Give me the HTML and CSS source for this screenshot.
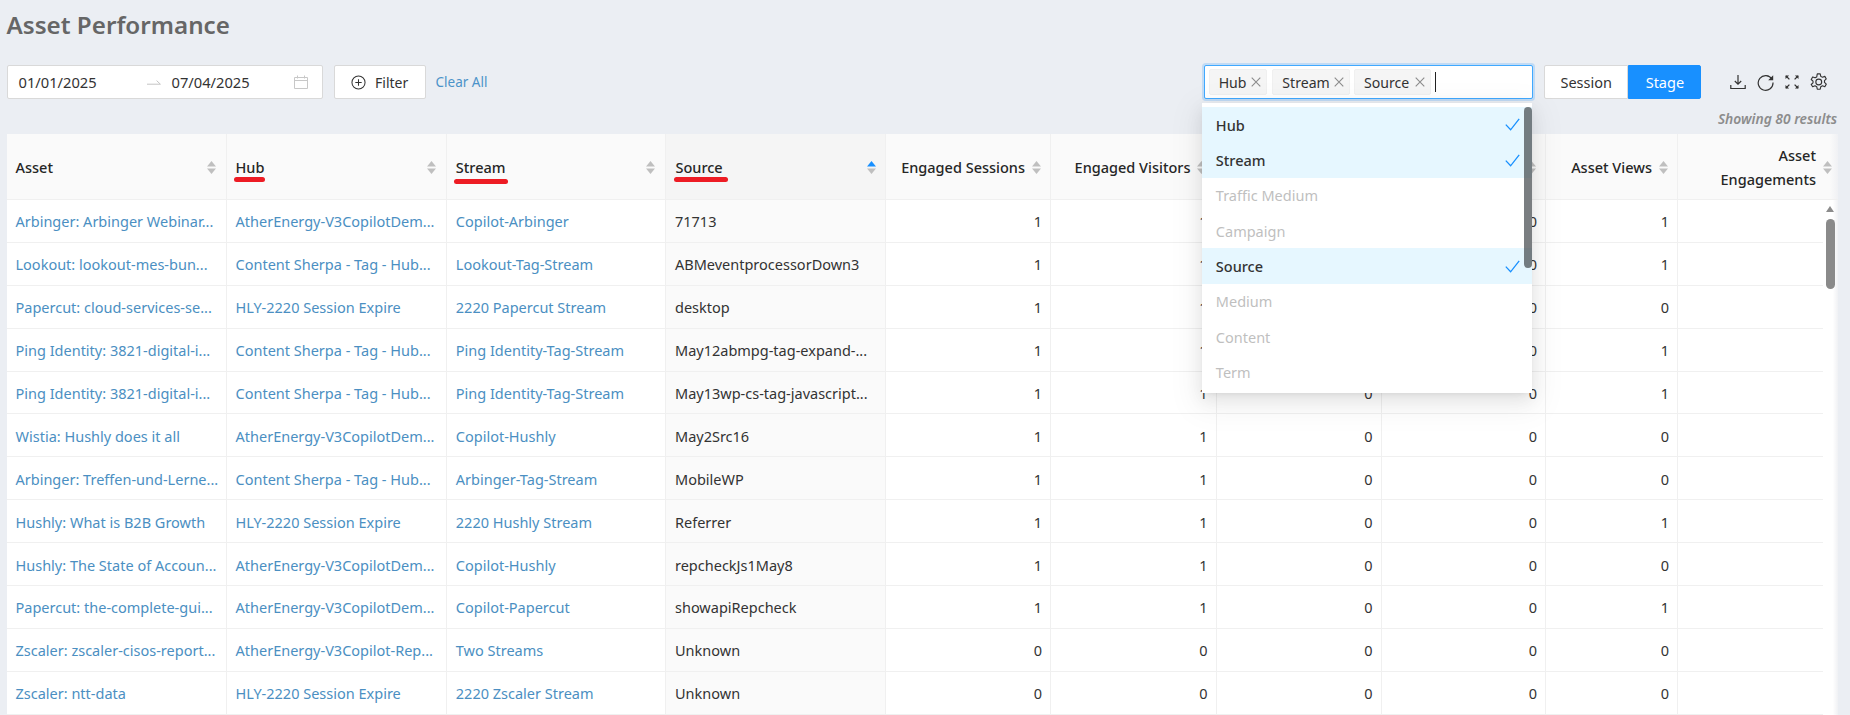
FILE: index.html
```html
<!DOCTYPE html>
<html lang="en">
<head>
<meta charset="utf-8">
<title>Asset Performance</title>
<link rel="stylesheet" href="styles.css">
</head>
<body>
<svg class="defs" width="0" height="0" aria-hidden="true">
  <symbol id="sort" viewBox="0 0 9 13"><path d="M4.5 0 9 5.6H0z"/><path d="M0 7.4h9L4.5 13z"/></symbol>
  <symbol id="tick" viewBox="0 0 15 13"><path d="M.8 6.6 5.6 11.8 14.2.8" fill="none" stroke="currentColor" stroke-width="1.3"/></symbol>
  <symbol id="close" viewBox="0 0 10 10"><path d="M.7.7l8.6 8.6M9.3.7.7 9.3" fill="none" stroke="currentColor" stroke-width="1.1"/></symbol>
</svg>
<main class="page">
  <h1 class="title">Asset Performance</h1>
  <div class="toolbar">
    <div class="range">
      <span class="date first">01/01/2025</span>
      <svg class="range-arrow" viewBox="0 0 14 6"><path d="M0 5.2h13.4L9.6 1.6" fill="none" stroke="#c4c4c4"/></svg>
      <span class="date">07/04/2025</span>
      <svg class="cal" viewBox="0 0 14 14"><path d="M.5 2.5h13v11H.5zM.5 5.5h13M3.5.5v3M10.5.5v3" fill="none" stroke="#c8c8c8"/></svg>
    </div>
    <button class="btn filter"><svg class="plus" viewBox="0 0 16 16"><circle cx="8" cy="8" r="7" fill="none" stroke="#333" stroke-width="1.1"/><path d="M8 4.6v6.8M4.6 8h6.8" stroke="#333" stroke-width="1.1"/></svg>Filter</button>
    <a class="clear">Clear All</a>
    <div class="select">
      <div class="select-box">
        <span class="tag t-hub">Hub<svg class="x"><use href="#close"/></svg></span>
        <span class="tag t-stream">Stream<svg class="x"><use href="#close"/></svg></span>
        <span class="tag t-source">Source<svg class="x"><use href="#close"/></svg></span>
        <span class="caret"></span>
      </div>
      <div class="menu">
        <div class="opt on">Hub<svg class="tick"><use href="#tick"/></svg></div>
        <div class="opt on">Stream<svg class="tick"><use href="#tick"/></svg></div>
        <div class="opt off">Traffic Medium</div>
        <div class="opt off">Campaign</div>
        <div class="opt on">Source<svg class="tick"><use href="#tick"/></svg></div>
        <div class="opt off">Medium</div>
        <div class="opt off">Content</div>
        <div class="opt off">Term</div>
        <span class="menu-thumb"></span>
      </div>
    </div>
    <div class="segment"><span class="seg">Session</span><span class="seg active">Stage</span></div>
    <div class="tools">
      <svg class="tool" viewBox="0 0 16 16"><path d="M8 1v9M4.8 7 8 10.2 11.2 7M.8 11v3.5h14.4V11" fill="none" stroke="#333" stroke-width="1.2"/></svg>
      <svg class="tool wide" viewBox="0 0 17 17"><path d="M15 5.2A7.4 7.4 0 1 0 16 8.5" fill="none" stroke="#333" stroke-width="1.2"/><path d="M16.2 1.2v5h-5z" fill="#333"/></svg>
      <svg class="tool small" viewBox="0 0 14 14"><path d="M1 1l3.4 3.4M13 1 9.6 4.4M1 13l3.4-3.4M13 13 9.6 9.6" stroke="#333" stroke-width="1.3"/><path d="M.5.5h3.6L.5 4.1zM13.5.5H9.9l3.6 3.6zM.5 13.5h3.6L.5 9.9zM13.5 13.5H9.9l3.6-3.6z" fill="#333"/></svg>
      <svg class="tool gear" viewBox="0.4 0 15.2 16"><path d="M6.7.8h2.6l.5 2.2 1.5.8 2.1-.8 1.3 2.3-1.6 1.5v1.6l1.6 1.5-1.3 2.3-2.1-.8-1.5.8-.5 2.2H6.7l-.5-2.2-1.5-.8-2.1.8L1.3 10.2l1.6-1.5V7.3L1.3 5.8l1.3-2.3 2.1.8 1.5-.8z" fill="none" stroke="#333" stroke-width="1" stroke-linejoin="round"/><circle cx="8" cy="8" r="2.6" fill="none" stroke="#333" stroke-width="1"/></svg>
    </div>
  </div>
  <p class="count">Showing 80 results</p>
  <section class="table">
    <div class="head">
      <div class="th"><span class="th-label">Asset</span><svg class="sort"><use href="#sort"/></svg></div>
      <div class="th"><span class="th-label marked">Hub</span><svg class="sort"><use href="#sort"/></svg></div>
      <div class="th"><span class="th-label marked long">Stream</span><svg class="sort"><use href="#sort"/></svg></div>
      <div class="th sorted"><span class="th-label marked wide-mark">Source</span><svg class="sort asc" viewBox="0 0 9 13"><path class="up" d="M4.5 0 9 5.6H0z"/><path d="M0 7.4h9L4.5 13z"/></svg></div>
      <div class="th num"><span class="th-label">Engaged Sessions</span><svg class="sort"><use href="#sort"/></svg></div>
      <div class="th num"><span class="th-label">Engaged Visitors</span><svg class="sort"><use href="#sort"/></svg></div>
      <div class="th num"><svg class="sort"><use href="#sort"/></svg></div>
      <div class="th num"><svg class="sort"><use href="#sort"/></svg></div>
      <div class="th num"><span class="th-label">Asset Views</span><svg class="sort"><use href="#sort"/></svg></div>
      <div class="th num last"><span class="th-label">Asset<br>Engagements</span><svg class="sort"><use href="#sort"/></svg></div>
    </div>
    <div class="body">
      <div class="rows">
        <div class="row"><a class="td">Arbinger: Arbinger Webinar...</a><a class="td">AtherEnergy-V3CopilotDem...</a><a class="td">Copilot-Arbinger</a><span class="td src">71713</span><span class="td n">1</span><span class="td n">1</span><span class="td n">0</span><span class="td n">0</span><span class="td n">1</span><span class="td n"></span></div>
        <div class="row"><a class="td">Lookout: lookout-mes-bun...</a><a class="td">Content Sherpa - Tag - Hub...</a><a class="td">Lookout-Tag-Stream</a><span class="td src">ABMeventprocessorDown3</span><span class="td n">1</span><span class="td n">1</span><span class="td n">0</span><span class="td n">0</span><span class="td n">1</span><span class="td n"></span></div>
        <div class="row"><a class="td">Papercut: cloud-services-se...</a><a class="td">HLY-2220 Session Expire</a><a class="td">2220 Papercut Stream</a><span class="td src">desktop</span><span class="td n">1</span><span class="td n">1</span><span class="td n">0</span><span class="td n">0</span><span class="td n">0</span><span class="td n"></span></div>
        <div class="row"><a class="td">Ping Identity: 3821-digital-i...</a><a class="td">Content Sherpa - Tag - Hub...</a><a class="td">Ping Identity-Tag-Stream</a><span class="td src">May12abmpg-tag-expand-...</span><span class="td n">1</span><span class="td n">1</span><span class="td n">0</span><span class="td n">0</span><span class="td n">1</span><span class="td n"></span></div>
        <div class="row"><a class="td">Ping Identity: 3821-digital-i...</a><a class="td">Content Sherpa - Tag - Hub...</a><a class="td">Ping Identity-Tag-Stream</a><span class="td src">May13wp-cs-tag-javascript...</span><span class="td n">1</span><span class="td n">1</span><span class="td n">0</span><span class="td n">0</span><span class="td n">1</span><span class="td n"></span></div>
        <div class="row"><a class="td">Wistia: Hushly does it all</a><a class="td">AtherEnergy-V3CopilotDem...</a><a class="td">Copilot-Hushly</a><span class="td src">May2Src16</span><span class="td n">1</span><span class="td n">1</span><span class="td n">0</span><span class="td n">0</span><span class="td n">0</span><span class="td n"></span></div>
        <div class="row"><a class="td">Arbinger: Treffen-und-Lerne...</a><a class="td">Content Sherpa - Tag - Hub...</a><a class="td">Arbinger-Tag-Stream</a><span class="td src">MobileWP</span><span class="td n">1</span><span class="td n">1</span><span class="td n">0</span><span class="td n">0</span><span class="td n">0</span><span class="td n"></span></div>
        <div class="row"><a class="td">Hushly: What is B2B Growth</a><a class="td">HLY-2220 Session Expire</a><a class="td">2220 Hushly Stream</a><span class="td src">Referrer</span><span class="td n">1</span><span class="td n">1</span><span class="td n">0</span><span class="td n">0</span><span class="td n">1</span><span class="td n"></span></div>
        <div class="row"><a class="td">Hushly: The State of Accoun...</a><a class="td">AtherEnergy-V3CopilotDem...</a><a class="td">Copilot-Hushly</a><span class="td src">repcheckJs1May8</span><span class="td n">1</span><span class="td n">1</span><span class="td n">0</span><span class="td n">0</span><span class="td n">0</span><span class="td n"></span></div>
        <div class="row"><a class="td">Papercut: the-complete-gui...</a><a class="td">AtherEnergy-V3CopilotDem...</a><a class="td">Copilot-Papercut</a><span class="td src">showapiRepcheck</span><span class="td n">1</span><span class="td n">1</span><span class="td n">0</span><span class="td n">0</span><span class="td n">1</span><span class="td n"></span></div>
        <div class="row"><a class="td">Zscaler: zscaler-cisos-report...</a><a class="td">AtherEnergy-V3Copilot-Rep...</a><a class="td">Two Streams</a><span class="td src">Unknown</span><span class="td n">0</span><span class="td n">0</span><span class="td n">0</span><span class="td n">0</span><span class="td n">0</span><span class="td n"></span></div>
        <div class="row"><a class="td">Zscaler: ntt-data</a><a class="td">HLY-2220 Session Expire</a><a class="td">2220 Zscaler Stream</a><span class="td src">Unknown</span><span class="td n">0</span><span class="td n">0</span><span class="td n">0</span><span class="td n">0</span><span class="td n">0</span><span class="td n"></span></div>
      </div>
      <div class="vscroll"><span class="vs-up"></span><span class="vs-thumb"></span></div>
    </div>
  </section>
</main>
</body>
</html>
```
FILE: styles.css
```css
* { box-sizing: border-box; }
html, body { margin: 0; height: 100%; overflow: hidden; }
body {
  background: #ebeef3;
  color: #333;
  font-family: "Noto Sans", "Open Sans", "Liberation Sans", sans-serif;
  font-size: 14.5px;
}
.defs { position: absolute; }
.page { padding: 0 12px 0 6.5px; }
.title {
  margin: 0;
  height: 65px;
  padding-top: 7px;
  font-size: 24.2px;
  line-height: 36px;
  font-weight: 600;
  color: #666;
}
.toolbar { display: flex; align-items: stretch; height: 34px; }
.range {
  width: 316px;
  display: flex;
  align-items: center;
  padding: 0 14px 0 11px;
  background: #fff;
  border: 1px solid #d9d9d9;
  border-radius: 2px;
  font-size: 14.7px;
}
.date { color: #333; }
.date.first { width: 128px; }
.range-arrow { width: 14px; height: 6px; margin-right: 11px; }
.cal { width: 14px; height: 14px; margin-left: auto; }
.btn {
  margin-left: 11.5px;
  width: 91.5px;
  display: flex;
  align-items: center;
  gap: 9px;
  padding: 0 0 0 16px;
  background: #fff;
  border: 1px solid #d9d9d9;
  border-radius: 2px;
  font-family: inherit;
  font-size: 14px;
  color: #333;
}
.plus { width: 15px; height: 15px; }
.clear {
  margin-left: 10px;
  align-self: center;
  font-size: 13.5px;
  color: #4b93c9;
}
.select { position: relative; width: 329.4px; margin-left: auto; }
.select-box {
  height: 34px;
  display: flex;
  align-items: center;
  gap: 5px;
  padding: 0 4px;
  background: #fff;
  border: 1px solid #40a9ff;
  border-radius: 2px;
  box-shadow: 0 0 0 2px rgba(24, 144, 255, .2);
}
.tag {
  height: 26px;
  display: flex;
  align-items: center;
  justify-content: space-between;
  padding: 0 5px 0 9px;
  background: #f5f5f5;
  border: 1px solid #f0f0f0;
  border-radius: 2px;
  white-space: nowrap;
  font-size: 14.1px;
}
.t-hub { width: 58.7px; }
.t-stream { width: 77.7px; }
.t-source { width: 77px; margin-left: -1px; }
.x { width: 10px; height: 10px; color: #8c8c8c; flex: none; }
.caret { width: 1px; height: 20px; background: #222; margin-left: -1px; }
.menu {
  position: absolute;
  z-index: 5;
  top: 38px;
  left: -1.3px;
  width: 330px;
  height: 290px;
  padding: 4px 0;
  background: #fff;
  box-shadow: 0 3px 6px -4px rgba(0,0,0,.12), 0 6px 16px rgba(0,0,0,.08), 0 9px 28px 8px rgba(0,0,0,.05);
}
.opt {
  height: 35.35px;
  display: flex;
  align-items: center;
  justify-content: space-between;
  padding: 0 12.5px 0 13.5px;
  color: #bfbfbf;
}
.opt.on { background: #e6f7ff; color: #333; font-weight: 500; }
.tick { width: 15px; height: 13px; color: #1890ff; }
.menu-thumb {
  position: absolute;
  top: 4px;
  right: 0;
  width: 8px;
  height: 161px;
  border-radius: 4px;
  background: rgba(70, 76, 80, .72);
}
.segment { display: flex; margin-left: 11px; width: 157.3px; }
.seg {
  display: flex;
  align-items: center;
  justify-content: center;
  flex: 84.6 0 0;
  background: #fff;
  border: 1px solid #d9d9d9;
  border-radius: 2px 0 0 2px;
}
.seg.active { flex: 72.7 0 0; background: #1890ff; border-color: #1890ff; color: #fff; border-radius: 0 2px 2px 0; }
.tools { display: flex; align-items: center; gap: 11px; margin-left: 28.2px; padding-right: 11px; }
.tool { width: 16px; height: 16px; }
.tool.wide { width: 17px; height: 17px; }
.tool.small { width: 14px; height: 14px; }
.tool.gear { width: 17.5px; height: 18px; }
.count {
  margin: 0;
  height: 35px;
  padding-top: 11px;
  text-align: right;
  font-size: 13.8px;
  line-height: 18px;
  font-style: italic;
  font-weight: 600;
  color: #8c8c8c;
  padding-right: 1px;
}
.table { position: relative; }
.head, .row {
  display: grid;
  grid-template-columns: 220px 220.3px 219.2px 220.5px 165px 165.5px 165px 164.5px 132px 1fr;
}
.head { height: 66px; }
.th {
  position: relative;
  display: flex;
  align-items: center;
  justify-content: space-between;
  gap: 7px;
  padding: 1px 9.5px 0 9px;
  background: #fafafa;
  border-right: 1px solid #f0f0f0;
  border-bottom: 1px solid #f0f0f0;
  font-weight: 500;
  color: #262626;
  white-space: nowrap;
}
.th.sorted { padding-left: 9.5px; }
.th.num { justify-content: flex-end; text-align: right; }
.th.last { border-right: 0; line-height: 24px; padding-right: 6px; background: linear-gradient(to right, #fafafa 95%, #f0f1f4); }
.th.sorted { background: #f5f5f5; }
.th-label.marked { position: relative; }
.th-label.marked::after {
  content: "";
  position: absolute;
  left: -1.5px;
  right: -1px;
  bottom: -5px;
  height: 5px;
  border-radius: 3px;
  background: #ed1c24;
}
.th-label.long::after { bottom: -7px; right: -2.5px; }
.th-label.wide-mark::after { right: -5px; }
.sort { flex: none; width: 9px; height: 13px; fill: #bfbfbf; }
.sort .up { fill: #1890ff; }
.body { display: flex; }
.rows { width: 1816.8px; }
.row { height: 42.9px; }
.td {
  display: flex;
  align-items: center;
  padding: 1px 9.5px 0 9px;
  background: #fff;
  border-right: 1px solid #f0f0f0;
  border-bottom: 1px solid #f0f0f0;
  white-space: nowrap;
  overflow: hidden;
  color: #4b8fc2;
}
.src { background: #fafafa; color: #333; }
.n { justify-content: flex-end; color: #333; padding-right: 8.5px; }
.row .td:last-child { border-right: 0; }
.vscroll {
  position: relative;
  flex: 1;
  background: linear-gradient(to right, #fff 65%, #f0f1f4);
}
.vs-up {
  position: absolute;
  top: 6px;
  left: 2.7px;
  border: solid transparent;
  border-width: 0 4.5px 6.5px;
  border-bottom-color: #8c8c8c;
}
.vs-thumb {
  position: absolute;
  top: 19px;
  left: 2.7px;
  width: 9.3px;
  height: 70px;
  border-radius: 4.5px;
  background: #8a8a8a;
}
```
